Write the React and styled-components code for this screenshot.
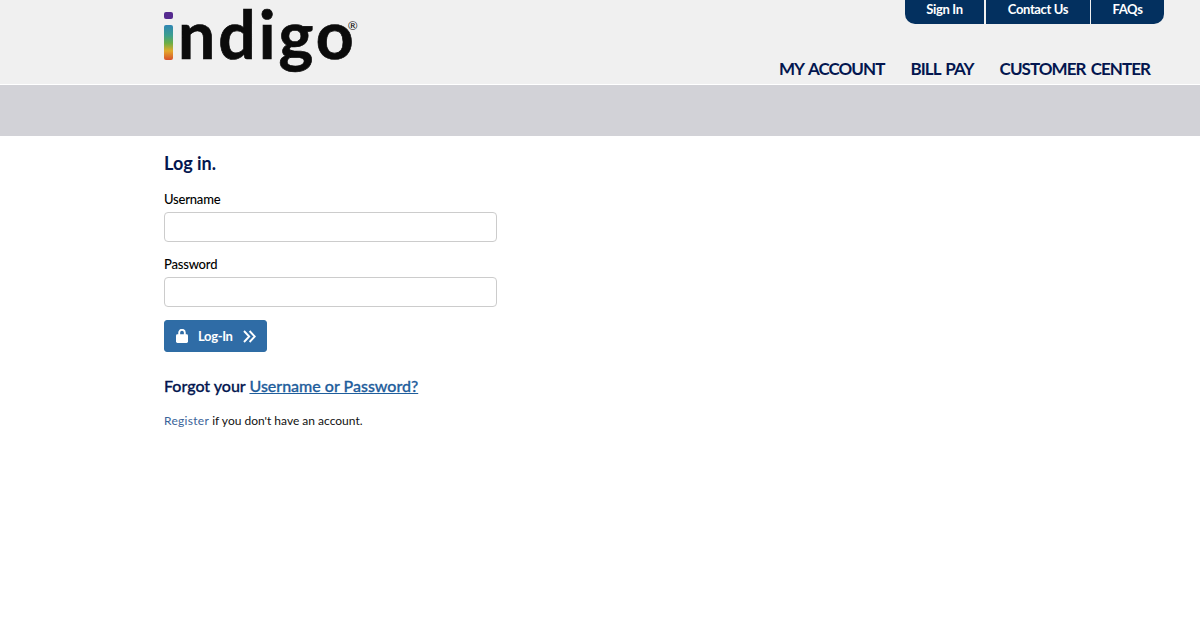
import styled, { createGlobalStyle } from 'styled-components';

const GlobalStyle = createGlobalStyle`
  html, body {
    margin: 0;
    padding: 0;
    background: #fff;
    font-family: Lato, "Liberation Sans", sans-serif;
  }
  * {
    box-sizing: border-box;
  }
`;

const topLinks = [
  { label: 'Sign In', width: 79, gap: 2 },
  { label: 'Contact Us', width: 104, gap: 1 },
  { label: 'FAQs', width: 73, gap: 0 },
];
const mainLinks = ['MY ACCOUNT', 'BILL PAY', 'CUSTOMER CENTER'];

export default function App() {
  return (
    <>
      <GlobalStyle />
      <Header>
        <Logo>
          <LogoStem>i</LogoStem>ndigo
          <LogoMark>®</LogoMark>
        </Logo>
        <HeaderNav>
          <TopNav>
            {topLinks.map((link) => (
              <TopLink key={link.label} $width={link.width} $gap={link.gap}>
                {link.label}
              </TopLink>
            ))}
          </TopNav>
          <MainNav>
            {mainLinks.map((link) => (
              <MainLink key={link}>{link}</MainLink>
            ))}
          </MainNav>
        </HeaderNav>
      </Header>
      <Band />
      <Content>
        <Title>Log in.</Title>
        <Label>Username</Label>
        <Input type="text" />
        <Label>Password</Label>
        <Input type="password" />
        <SubmitButton type="button">
          <svg width="12" height="14" viewBox="0 0 12 14" aria-hidden="true">
            <path d="M3.2 6V3.6a2.8 2.8 0 0 1 5.6 0V6" fill="none" stroke="#fff" strokeWidth="1.9" />
            <rect y="5.2" width="12" height="8.8" rx="1.4" fill="#fff" />
          </svg>
          <SubmitText>Log-In</SubmitText>
          <svg width="13" height="13" viewBox="0 0 13 13" aria-hidden="true">
            <path
              d="M1 1l5.2 5.5L1 12M6.6 1l5.2 5.5L6.6 12"
              fill="none"
              stroke="#fff"
              strokeWidth="1.9"
            />
          </svg>
        </SubmitButton>
        <Forgot>
          Forgot your <ForgotLink href="#">Username or Password?</ForgotLink>
        </Forgot>
        <Register>
          <RegisterLink href="#">Register</RegisterLink> if you don't have an account.
        </Register>
      </Content>
    </>
  );
}

const Header = styled.header`
  display: flex;
  justify-content: space-between;
  height: 85px;
  padding: 0 36px 0 164px;
  background: #f0f0f0;
  border-bottom: 1px solid #fff;
`;
const Logo = styled.div`
  position: relative;
  align-self: flex-start;
  font-size: 66px;
  line-height: 68px;
  font-weight: 700;
  letter-spacing: 3px;
  color: #0b0b0b;
  -webkit-text-stroke: 0.7px #0b0b0b;
`;
const LogoStem = styled.span`
  position: relative;
  display: inline-block;
  width: 14px;
  font-size: 50px;
  letter-spacing: 0;
  color: transparent;
  -webkit-text-stroke: 0;
  &::before {
    content: '';
    position: absolute;
    top: 6px;
    left: 0;
    width: 9px;
    height: 7px;
    border-radius: 2px;
    background: #552a8f;
  }
  &::after {
    content: '';
    position: absolute;
    top: 19px;
    left: 0;
    width: 9px;
    height: 35px;
    border-radius: 2px;
    background: linear-gradient(
      to bottom,
      #2f86b4 0%,
      #3d9f8e 30%,
      #6cae45 52%,
      #e3a92c 74%,
      #d8502c 100%
    );
  }
`;
const LogoMark = styled.span`
  position: absolute;
  top: 20px;
  right: -1px;
  font-size: 12px;
  line-height: 12px;
  font-weight: 400;
  letter-spacing: 0;
  -webkit-text-stroke: 0;
`;
const HeaderNav = styled.div`
  display: flex;
  flex-direction: column;
  align-items: flex-end;
`;
const TopNav = styled.nav`
  display: flex;
  height: 24px;
`;
const TopLink = styled.a`
  width: ${(props) => props.$width}px;
  margin-right: ${(props) => props.$gap}px;
  background: #03305f;
  color: #fff;
  font-size: 13px;
  font-weight: 700;
  letter-spacing: -0.35px;
  line-height: 19px;
  text-align: center;
  &:first-child {
    border-bottom-left-radius: 10px;
  }
  &:last-child {
    border-bottom-right-radius: 10px;
  }
`;
const MainNav = styled.nav`
  display: flex;
  gap: 26px;
  margin-top: 34px;
  padding-right: 14px;
`;
const MainLink = styled.a`
  color: #03164f;
  font-size: 17px;
  font-weight: 700;
  letter-spacing: -0.95px;
  word-spacing: 2px;
  line-height: 22px;
`;
const Band = styled.div`
  height: 51px;
  background: #d2d2d7;
`;
const Content = styled.main`
  display: flex;
  flex-direction: column;
  align-items: flex-start;
  padding: 15px 0 0 164px;
`;
const Title = styled.h2`
  margin: 0 0 16px;
  color: #03164f;
  font-size: 18px;
  font-weight: 700;
  line-height: 24px;
`;
const Label = styled.label`
  margin-bottom: 5px;
  color: #000;
  font-size: 13px;
  font-weight: 500;
  letter-spacing: -0.2px;
  line-height: 16px;
`;
const Input = styled.input`
  width: 333px;
  height: 30px;
  margin-bottom: 14px;
  border: 1px solid #ccc;
  border-radius: 4px;
  background: #fff;
`;
const SubmitButton = styled.button`
  display: flex;
  align-items: center;
  width: 103px;
  height: 32px;
  margin-top: -1px;
  padding: 0 0 0 11px;
  border: 1px solid #2e6da4;
  border-radius: 3px;
  background: #2f6ca6;
  color: #fff;
  font-family: inherit;
`;
const SubmitText = styled.span`
  margin: 0 10px;
  font-size: 13px;
  font-weight: 700;
  letter-spacing: -0.35px;
`;
const Forgot = styled.p`
  margin: 23px 0 0;
  color: #03164f;
  font-size: 16px;
  font-weight: 500;
  line-height: 22px;
  -webkit-text-stroke: 0.3px;
`;
const ForgotLink = styled.a`
  color: #1f5e9c;
  text-decoration: underline;
`;
const Register = styled.p`
  margin: 15px 0 0;
  color: #111;
  font-size: 12px;
  line-height: 18px;
`;
const RegisterLink = styled.a`
  color: #3a6399;
  letter-spacing: 0.3px;
  text-decoration: none;
`;
